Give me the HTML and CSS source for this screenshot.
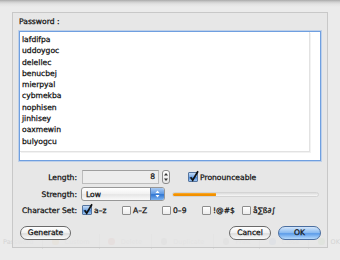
FILE: index.html
```html
<!DOCTYPE html>
<html>
<head>
<link rel="stylesheet" href="styles.css">
</head>
<body>

<div class="ghost">
	<span class="gitem">Password</span>
	<span class="gsep"></span>
	<span class="gdot orange"></span><span class="gitem">Custom</span>
	<span class="gsep"></span>
	<span class="gdot red"></span><span class="gitem">Delete</span>
	<span class="gsep"></span>
	<span class="gdot grey"></span><span class="gitem">Duplicate</span>
	<span class="gsep"></span>
	<span class="gdot grey"></span><span class="gitem">Print</span>
	<span class="gsep"></span>
	<span class="gdot blue"></span><span class="gitem">Close</span>
	<span class="gsep"></span>
	<span class="gdot green"></span><span class="gitem">OK</span>
</div>

<div class="sheet">
	<div class="title">Password :</div>

	<div class="frame">
		<div class="view">
			<div class="line">lafdifpa</div>
			<div class="line">uddoygoc</div>
			<div class="line">delellec</div>
			<div class="line">benucbej</div>
			<div class="line">mierpyal</div>
			<div class="line">cybmekba</div>
			<div class="line">nophisen</div>
			<div class="line">jinhisey</div>
			<div class="line">oaxmewin</div>
			<div class="line">bulyogcu</div>
		</div>
	</div>

	<div class="row row-length">
		<span class="lbl">Length:</span>
		<span class="field">8</span>
		<span class="stepper">
			<svg width="8" height="14" viewBox="0 0 8 14">
				<path d="M2 5.5 L4 3 L6 5.5 Z" fill="#333"/>
				<path d="M2 8.5 L4 11 L6 8.5 Z" fill="#333"/>
			</svg>
		</span>
		<span class="check on pron">
			<span class="box"><svg width="12" height="13" viewBox="0 0 12 13"><path d="M2.6 7.2 L4.7 10.2 L10 1.2" fill="none" stroke="#111" stroke-width="1.7"/></svg></span>
			<span class="clabel">Pronounceable</span>
		</span>
	</div>

	<div class="row row-strength">
		<span class="lbl">Strength:</span>
		<span class="popup">
			<span class="ptext">Low</span>
			<span class="pcap">
				<svg width="13" height="12" viewBox="0 0 13 12">
					<path d="M4.5 5 L6.5 2.5 L8.5 5 Z" fill="#fff"/>
					<path d="M4.5 7 L6.5 9.5 L8.5 7 Z" fill="#fff"/>
				</svg>
			</span>
		</span>
		<span class="meter"><span class="fill"></span></span>
	</div>

	<div class="row row-charset">
		<span class="lbl">Character Set:</span>
		<span class="check on">
			<span class="box"><svg width="12" height="13" viewBox="0 0 12 13"><path d="M2.6 7.2 L4.7 10.2 L10 1.2" fill="none" stroke="#111" stroke-width="1.7"/></svg></span>
			<span class="clabel">a–z</span>
		</span>
		<span class="check">
			<span class="box"></span>
			<span class="clabel">A–Z</span>
		</span>
		<span class="check">
			<span class="box"></span>
			<span class="clabel">0–9</span>
		</span>
		<span class="check">
			<span class="box"></span>
			<span class="clabel">!@#$</span>
		</span>
		<span class="check">
			<span class="box"></span>
			<span class="clabel">å∑ß∂∫</span>
		</span>
	</div>

	<div class="buttons">
		<span class="btn generate">Generate</span>
		<span class="spacer"></span>
		<span class="btn cancel">Cancel</span>
		<span class="btn ok">OK</span>
	</div>
</div>

</body>
</html>
```

FILE: styles.css
```css
html, body {
  margin: 0;
  padding: 0;
}

body {
  width: 340px;
  height: 260px;
  overflow: hidden;
  position: relative;
  background: linear-gradient(#a9a9a9 0px, #cfcfcf 2px, #e2e2e2 4px, #ebebeb 7px, #ebebeb 100%);
  font-family: "DejaVu Sans", sans-serif;
  font-size: 7.6px;
  color: #111;
}

/* faded toolbar of the window behind the sheet */
.ghost {
  position: absolute;
  left: 0;
  top: 233px;
  width: 340px;
  height: 17px;
  display: flex;
  align-items: center;
  gap: 6px;
  padding-left: 3px;
  box-sizing: border-box;
  font-size: 6.5px;
  color: #d4d4d4;
  white-space: nowrap;
}

.gsep {
  width: 1px;
  height: 15px;
  background: #dcdcdc;
  margin: 0 3px;
}

.gdot {
  width: 7px;
  height: 7px;
  border-radius: 50%;
  opacity: 0.3;
}
.gdot.orange { background: #e9a23a; }
.gdot.red { background: #d45a4a; }
.gdot.grey { background: #9a9a9a; }
.gdot.blue { background: #5b86c8; }
.gdot.green { background: #6cb24e; }

.sheet {
  position: relative;
  margin: 12px 0 0 12px;
  width: 316px;
  height: 236px;
  box-sizing: border-box;
  border: 1px solid #c8c8c8;
  background: rgba(229, 229, 229, 0.82);
  padding: 3px 6px 0 6px;
  -webkit-text-stroke: 0.25px #111;
}

.title {
  line-height: 11px;
  height: 11px;
}

.frame {
  margin-top: 4px;
  height: 130px;
  box-sizing: border-box;
  border: 1px solid #6f9fe0;
  box-shadow: 0 0 0 1px rgba(140, 180, 235, 0.45);
  background: #fff;
}

.view {
  width: 290px;
  height: 120px;
  box-sizing: border-box;
  border-right: 1px solid #e2e2e2;
  border-bottom: 1px solid #e2e2e2;
  box-shadow: 1px 1px 0 #f2f2f2;
  padding: 2px 0 0 2px;
}

.line {
  line-height: 11.3px;
  height: 11.3px;
}

.row {
  display: flex;
  align-items: center;
  height: 14px;
}

.row-length { margin-top: 9px; }
.row-strength { margin-top: 3px; }
.row-charset { margin-top: 2px; }

.lbl {
  width: 58px;
  text-align: right;
  flex: none;
}

.field {
  margin-left: 5px;
  width: 77px;
  height: 14px;
  box-sizing: border-box;
  border: 1px solid #bdbdbd;
  border-top-color: #9f9f9f;
  background: #ededed;
  text-align: right;
  padding-right: 3px;
  line-height: 12px;
}

.stepper {
  margin-left: 3px;
  width: 8px;
  height: 14px;
  box-sizing: border-box;
  border: 1px solid #8c8c8c;
  border-radius: 3px;
  background: linear-gradient(#ffffff, #e4e4e4);
  display: flex;
  justify-content: center;
  align-items: center;
}

.stepper svg {
  display: block;
  margin: -1px;
}

.check {
  display: flex;
  align-items: center;
  flex: none;
  width: 40px;
}

.row-charset .check:first-child { width: 41px; }

.check .box {
  position: relative;
  width: 9px;
  height: 9px;
  box-sizing: border-box;
  border: 1px solid #8e8e8e;
  border-radius: 1px;
  background: linear-gradient(#ffffff, #ececec);
  flex: none;
}

.check.on .box {
  width: 10px;
  height: 10px;
  border-color: #56759f;
  background: linear-gradient(#c5dcf6, #77a9e6 50%, #4d8bd8 55%, #9fc7f3);
}

.check .box svg {
  position: absolute;
  left: -1px;
  top: -3px;
}

.clabel {
  margin-left: 2px;
}

.row-charset .check:nth-child(2) { margin-left: 5px; }

.pron {
  margin-left: 18px;
  width: auto;
}

.popup {
  margin-left: 4px;
  width: 84px;
  height: 14px;
  box-sizing: border-box;
  border: 1px solid #979797;
  border-radius: 3px;
  background: linear-gradient(#ffffff, #f1f1f1 50%, #e6e6e6 55%, #fafafa);
  display: flex;
  align-items: center;
  overflow: hidden;
}

.ptext {
  flex: 1;
  padding-left: 4px;
}

.pcap {
  width: 13px;
  height: 12px;
  border-left: 1px solid #5f82b4;
  background: linear-gradient(#a9cbf4, #5c98e3 50%, #2f75d2 55%, #7fb5f1);
}

.pcap svg {
  display: block;
}

.meter {
  margin-left: 7px;
  width: 147px;
  height: 5px;
  box-sizing: border-box;
  border-radius: 3px;
  background: linear-gradient(#dcdcdc, #f7f7f7);
  border: 1px solid #d4d4d4;
  overflow: hidden;
  display: flex;
}

.meter .fill {
  width: 44px;
  background: linear-gradient(#ffc25a, #f39200 50%, #ee8a00);
  border-radius: 2px;
  margin: -1px 0 -1px -1px;
}

.buttons {
  margin-top: 9px;
  display: flex;
  align-items: center;
  height: 14px;
}

.spacer {
  flex: 1;
}

.btn {
  height: 14px;
  box-sizing: border-box;
  border: 1px solid #6a6a6a;
  border-radius: 7px;
  background: linear-gradient(#ffffff, #f0f0f0 50%, #dedede 55%, #fbfbfb);
  display: flex;
  align-items: center;
  justify-content: center;
  line-height: 12px;
}

.generate {
  margin-left: 1px;
  width: 51px;
}

.cancel {
  width: 42px;
}

.ok {
  margin-left: 7px;
  width: 43px;
  border-color: #4b6e9f;
  background: linear-gradient(#d3e6fb, #86b8f0 50%, #5c9ce9 55%, #b6dafd);
}
```
